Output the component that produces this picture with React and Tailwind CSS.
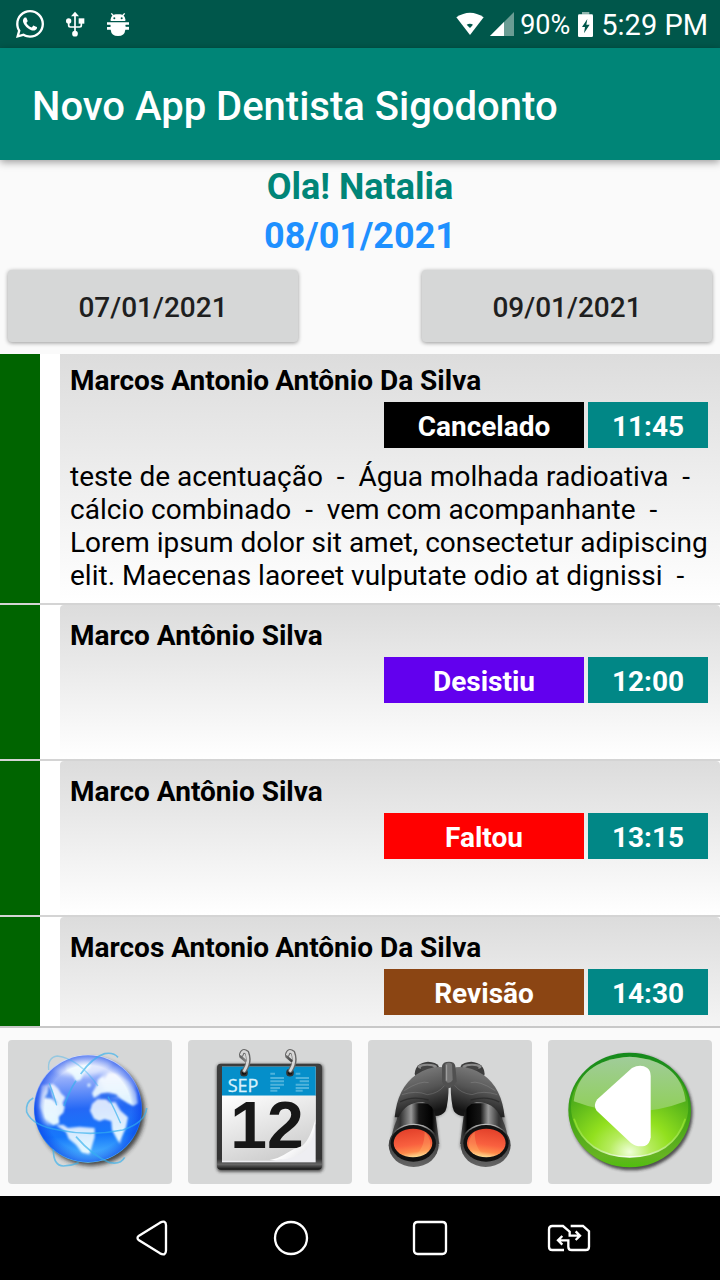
import { FaWhatsapp } from 'react-icons/fa';

const appointments = [
  {
    id: 1,
    name: ['Marcos Antonio', 'Antônio Da Silva'],
    status: 'Cancelado',
    color: 'bg-black',
    time: '11:45',
    notes:
      'teste de acentuação  -  Água molhada radioativa  -\ncálcio combinado  -  vem com acompanhante  -\nLorem ipsum dolor sit amet, consectetur adipiscing\nelit. Maecenas laoreet vulputate odio at dignissi  -',
  },
  { id: 2, name: ['Marco Antônio Silva'], status: 'Desistiu', color: 'bg-[#6200ee]', time: '12:00' },
  { id: 3, name: ['Marco Antônio Silva'], status: 'Faltou', color: 'bg-[#ff0000]', time: '13:15' },
  { id: 4, name: ['Marcos Antonio', 'Antônio Da Silva'], status: 'Revisão', color: 'bg-[#8b4513]', time: '14:30' },
];

const UsbIcon = () => (
  <svg viewBox="190 30 66 84" className="w-[22px] h-7" fill="#fff" stroke="#fff">
    <path d="M223 42V98M204 66V76Q204 81 209 81H237Q242 81 242 76V66" fill="none" strokeWidth="5" />
    <path d="M223 35L211 49H235Z" stroke="none" />
    <circle cx="204" cy="63" r="8" stroke="none" />
    <rect x="234" y="55" width="17" height="16" stroke="none" />
    <circle cx="223" cy="101" r="8.500" stroke="none" />
  </svg>
);

const BugIcon = () => (
  <svg viewBox="318 36 72 75" className="w-6 h-[25px]" fill="#fff">
    <path d="M334 40L341 48M374 40L367 48" stroke="#fff" strokeWidth="4" />
    <path d="M332 63V58Q334 44 347 43H361Q374 44 376 58V63Z" />
    <path d="M321 67H387V74H377V79H387V89H376Q374 108 354 108Q334 108 332 89H321V81H331V74H321Z" />
    <path d="M321 75H331V80H321ZM377 75H387V80H377Z" fill="#00574b" />
    <circle cx="343" cy="55" r="3" fill="#00574b" />
    <circle cx="365" cy="55" r="3" fill="#00574b" />
  </svg>
);

const WifiIcon = () => (
  <svg viewBox="57 36 84 72" className="w-7 h-6">
    <path d="M58 52Q99 25 140 52L99 105Z" fill="#fff" />
    <path d="M89 74Q99 69 108 74L99 84Z" fill="#00574b" />
  </svg>
);

const SignalIcon = () => (
  <svg viewBox="159 36 72 72" className="w-6 h-6">
    <path d="M231 36V108H159Z" fill="#6a9d94" />
    <path d="M201 66V108H159Z" fill="#fff" />
  </svg>
);

const BatteryIcon = () => (
  <svg viewBox="426 33 45 75" className="w-[15px] h-[25px]">
    <path d="M438 33H460V41H438Z" fill="#8fb5ae" />
    <rect x="426" y="40" width="45" height="68" rx="4" fill="#fff" />
    <path d="M454 54L438 78H447L444 97L461 71H451Z" fill="#00574b" />
  </svg>
);

const GlobeIcon = () => (
  <svg viewBox="24 60 492 432" className="w-full h-full">
    <defs>
      <linearGradient id="sea" x1="0.45" y1="0" x2="0.5" y2="1">
        <stop offset="0" stopColor="#dfe6ff" />
        <stop offset="0.25" stopColor="#86a4fa" />
        <stop offset="0.5" stopColor="#2468f6" />
        <stop offset="0.75" stopColor="#1678fb" />
        <stop offset="1" stopColor="#5cc6ff" />
      </linearGradient>
      <radialGradient id="seaEdge">
        <stop offset="0.8" stopColor="#0a3fe8" stopOpacity="0" />
        <stop offset="1" stopColor="#0a3fe8" stopOpacity="0.65" />
      </radialGradient>
      <linearGradient id="land" x1="0" y1="0" x2="0" y2="1">
        <stop offset="0" stopColor="#fff" stopOpacity="0.8" />
        <stop offset="1" stopColor="#e4f8ff" />
      </linearGradient>
      <filter id="soft"><feGaussianBlur stdDeviation="7" /></filter>
      <filter id="softLand"><feGaussianBlur stdDeviation="3" /></filter>
      <clipPath id="globeClip"><circle cx="264" cy="266" r="160" /></clipPath>
    </defs>
    <circle cx="273" cy="276" r="161" fill="#222" opacity="0.8" filter="url(#soft)" />
    <circle cx="264" cy="266" r="162" fill="url(#sea)" />
    <g clipPath="url(#globeClip)">
      <ellipse cx="240" cy="130" rx="96" ry="38" fill="#fff" opacity="0.6" filter="url(#soft)" />
      <ellipse cx="358" cy="184" rx="56" ry="46" fill="#fff" opacity="0.55" filter="url(#soft)" />
      <ellipse cx="146" cy="262" rx="30" ry="54" fill="#fff" opacity="0.55" filter="url(#soft)" />
      <g fill="url(#land)" filter="url(#softLand)">
        <path d="M196 128Q232 112 268 122L272 142L252 158L242 180L228 184L218 164L198 150Z" />
        <path d="M124 196L160 192L175 206L183 220L196 232L188 250L194 262L190 278L176 290L178 310L160 316L134 296L120 260Z" />
        <path d="M168 316L190 314L204 324L238 320L284 324L284 352L276 378L268 404L246 398L228 374L206 356L198 336Z" />
        <path d="M270 272L276 252L292 238L318 238L330 248L346 246L362 272L384 292L378 322L366 350L360 372L350 356L336 330L334 304L314 298L298 304L282 296Z" />
        <path d="M276 220L290 196L294 176L312 178L326 158L352 160L388 184L410 218L414 250L400 258L384 250L364 238L350 224L330 216L304 220L282 234Z" />
        <path d="M262 192L270 190L272 198L264 202ZM298 174L314 168L308 186Z" />
      </g>
      <g fill="#2368ee" filter="url(#softLand)" opacity="0.8">
        <path d="M146 194L154 210L158 228L174 254L156 236L134 234L142 218Z" />
        <path d="M300 226L322 220L350 224L350 232L326 236L302 234Z" />
        <path d="M354 238L372 248L392 268L372 262Z" />
      </g>
      <circle cx="264" cy="266" r="162" fill="url(#seaEdge)" />
    </g>
    <g fill="none" stroke="#34b1ee" strokeWidth="5" opacity="0.65">
      <path d="M192 258Q208 212 228 182M242 162Q278 112 314 101Q340 96 354 112" />
      <path d="M146 150Q142 112 172 108Q236 116 294 198" strokeWidth="4" opacity="0.6" />
      <path d="M100 234Q76 246 80 276Q98 318 176 330Q270 350 368 330Q436 308 440 264" />
      <path d="M148 190Q160 220 170 256M324 230Q344 268 362 310" strokeWidth="4" />
      <path d="M228 350Q280 410 330 428Q362 434 374 412M160 388Q160 438 190 438Q212 438 236 428" />
    </g>
  </svg>
);

const CalendarIcon = () => (
  <svg viewBox="24 60 492 432" className="w-full h-full">
    <defs>
      <linearGradient id="frame" x1="0" y1="0" x2="0" y2="1">
        <stop offset="0" stopColor="#3d3d3d" />
        <stop offset="0.9" stopColor="#333" />
        <stop offset="0.95" stopColor="#666" />
        <stop offset="1" stopColor="#111" />
      </linearGradient>
      <linearGradient id="sheet" x1="0" y1="0" x2="0.5" y2="1">
        <stop offset="0" stopColor="#fff" />
        <stop offset="1" stopColor="#cfcfcf" />
      </linearGradient>
      <linearGradient id="curl" x1="0" y1="0" x2="1" y2="1">
        <stop offset="0.3" stopColor="#bbb" />
        <stop offset="0.55" stopColor="#fff" />
        <stop offset="1" stopColor="#d8d8dc" />
      </linearGradient>
      <linearGradient id="ring" x1="0" y1="0" x2="1" y2="0">
        <stop offset="0" stopColor="#666" />
        <stop offset="0.5" stopColor="#fff" />
        <stop offset="1" stopColor="#444" />
      </linearGradient>
      <filter id="calShadow"><feGaussianBlur stdDeviation="4" /></filter>
    </defs>
    <rect x="110" y="132" width="320" height="324" rx="14" fill="#222" opacity="0.7" filter="url(#calShadow)" />
    <rect x="111" y="131" width="315" height="318" rx="12" fill="url(#frame)" />
    <rect x="126" y="140" width="281" height="287" fill="#eeeef2" />
    <rect x="126" y="140" width="281" height="87" fill="#058fca" />
    <path d="M126 227H407V310Q392 358 378 382Q342 418 270 422H126Z" fill="url(#sheet)" />
    <text x="143" y="216" fontFamily="'Open Sans', sans-serif" fontSize="54" fill="#d8f2fd" stroke="#d8f2fd" strokeWidth="1">SEP</text>
    <g stroke="#62bce0" strokeWidth="6" fill="none" opacity="0.8">
      <path d="M271 161H285M271 174H312M271 184H312M271 194H312M271 204H300M271 212H292" />
      <path d="M347 161H361M347 174H387M359 184H387M347 194H387M347 204H387M347 212H368" />
    </g>
    <text x="151" y="385" fontFamily="'Liberation Sans', sans-serif" fontWeight="700" fontSize="198" fill="#171717">12</text>
    <path d="M406 298Q390 360 366 378Q340 386 322 398Q296 416 268 419Q340 426 380 388Q404 358 406 298Z" fill="url(#curl)" />
    <g fill="none" strokeLinecap="round">
      <circle cx="192" cy="158" r="9" stroke="#333" strokeWidth="5" fill="#111" />
      <circle cx="330" cy="158" r="9" stroke="#333" strokeWidth="5" fill="#111" />
      <path d="M184 104Q188 88 201 98Q212 124 193 152M322 104Q326 88 339 98Q350 124 331 152" stroke="#666" strokeWidth="14" />
      <path d="M184 104Q188 88 200 98Q210 124 193 152M322 104Q326 88 338 98Q348 124 331 152" stroke="#d6d6d6" strokeWidth="8" />
      <path d="M182 110L196 122M320 110L334 122" stroke="url(#ring)" strokeWidth="8" />
    </g>
  </svg>
);

const BinocularsIcon = () => (
  <svg viewBox="24 60 492 432" className="w-full h-full">
    <defs>
      <linearGradient id="barrel" x1="0" y1="0" x2="1" y2="0">
        <stop offset="0" stopColor="#555" />
        <stop offset="0.2" stopColor="#333" />
        <stop offset="0.42" stopColor="#999" />
        <stop offset="0.58" stopColor="#151515" />
        <stop offset="0.85" stopColor="#000" />
        <stop offset="1" stopColor="#555" />
      </linearGradient>
      <linearGradient id="body" x1="0" y1="0" x2="0.3" y2="1">
        <stop offset="0" stopColor="#8a8a8a" />
        <stop offset="0.55" stopColor="#555" />
        <stop offset="1" stopColor="#151515" />
      </linearGradient>
      <linearGradient id="lens" x1="0.4" y1="0" x2="0.6" y2="1">
        <stop offset="0" stopColor="#e2402a" />
        <stop offset="0.55" stopColor="#f9603f" />
        <stop offset="0.8" stopColor="#ff8a4a" />
        <stop offset="1" stopColor="#ffe9a0" />
      </linearGradient>
      <linearGradient id="rim" x1="0" y1="0" x2="0" y2="1">
        <stop offset="0" stopColor="#c4c4c4" />
        <stop offset="0.25" stopColor="#333" />
        <stop offset="1" stopColor="#666" />
      </linearGradient>
      <filter id="binShadow"><feGaussianBlur stdDeviation="4" /></filter>
      <g id="tube">
        <path d="M112 270Q118 218 160 178L248 210L260 264Q248 288 228 290L238 384H94L98 336L104 290Z" fill="#222" opacity="0.5" filter="url(#binShadow)" />
        <path d="M164 162Q166 128 204 125Q228 126 236 138V174L170 178Z" fill="#3d3d3d" />
        <ellipse cx="202" cy="140" rx="29" ry="9" fill="#8a8a8a" />
        <ellipse cx="202" cy="144" rx="20" ry="7" fill="#444" />
        <path d="M120 250H222L238 372H92Q96 330 110 300Z" fill="url(#barrel)" />
        <path d="M104 292Q112 204 168 164Q210 136 252 142L266 190Q266 250 256 274Q246 288 226 288Q222 254 188 246Q136 246 116 292Z" fill="url(#body)" />
        <path d="M126 224Q168 210 202 224Q236 220 254 196M132 212Q182 180 206 188" stroke="#aaa" strokeWidth="2" fill="none" opacity="0.4" />
        <path d="M120 246Q156 226 206 240" stroke="#252525" strokeWidth="4" fill="none" opacity="0.7" />
        <ellipse cx="161" cy="376" rx="75" ry="65" fill="url(#rim)" />
        <ellipse cx="160" cy="370" rx="68" ry="55" fill="#111" />
        <ellipse cx="159" cy="369" rx="58" ry="43" fill="url(#lens)" />
        <path d="M194 334Q220 362 206 392Q184 408 160 410Q194 390 194 334Z" fill="#ffc070" opacity="0.3" />
      </g>
    </defs>
    <use href="#tube" />
    <use href="#tube" transform="translate(538 0) scale(-1 1)" />
    <path d="M246 138Q248 125 267 125Q284 125 286 138L290 184Q280 202 266 205Q252 200 246 184Z" fill="#505050" />
    <path d="M256 132Q266 124 276 132L278 180Q268 196 256 182Z" fill="#747474" />
    <path d="M260 134V182" stroke="#a5a5a5" strokeWidth="3" />
  </svg>
);

const BackIcon = () => (
  <svg viewBox="24 60 492 432" className="w-full h-full">
    <defs>
      <linearGradient id="greenRim" x1="0" y1="0" x2="0" y2="1">
        <stop offset="0" stopColor="#148a1c" />
        <stop offset="0.55" stopColor="#41a315" />
        <stop offset="0.9" stopColor="#66b422" />
        <stop offset="1" stopColor="#4fbe0e" />
      </linearGradient>
      <radialGradient id="greenFace" cx="0.5" cy="0.95" r="0.7">
        <stop offset="0" stopColor="#efffd8" />
        <stop offset="0.25" stopColor="#b6ec5e" />
        <stop offset="0.5" stopColor="#92e01e" />
        <stop offset="1" stopColor="#4fae1a" />
      </radialGradient>
      <linearGradient id="gloss" x1="0" y1="0" x2="0" y2="1">
        <stop offset="0" stopColor="#a0cc9a" />
        <stop offset="1" stopColor="#90d058" />
      </linearGradient>
      <linearGradient id="lip" x1="0" y1="0" x2="1" y2="0">
        <stop offset="0" stopColor="#8adb28" />
        <stop offset="0.5" stopColor="#fff" />
        <stop offset="1" stopColor="#8adb28" />
      </linearGradient>
      <filter id="backShadow"><feGaussianBlur stdDeviation="5" /></filter>
    </defs>
    <ellipse cx="274" cy="277" rx="184" ry="174" fill="#222" opacity="0.75" filter="url(#backShadow)" />
    <ellipse cx="269" cy="270" rx="184" ry="172" fill="url(#greenRim)" />
    <ellipse cx="269" cy="261" rx="176" ry="150" fill="url(#greenFace)" />
    <path d="M102 296Q138 408 269 411Q400 408 436 296" fill="none" stroke="url(#lip)" strokeWidth="5" />
    <path d="M101 244Q116 120 269 110Q422 120 437 244Q270 308 101 244Z" fill="url(#gloss)" />
    <path d="M276 144Q302 130 322 144Q332 152 332 168V352Q330 372 314 378Q288 382 272 368L170 272Q158 256 172 238Z" fill="#fff" />
  </svg>
);

const menu = [
  { label: 'Site', Icon: GlobeIcon },
  { label: 'Agenda', Icon: CalendarIcon },
  { label: 'Pesquisar', Icon: BinocularsIcon },
  { label: 'Voltar', Icon: BackIcon },
];

const navIcons = [
  {
    label: 'Back',
    view: '75 66 102 120',
    size: 'w-[34px] h-10',
    path: 'M87 119L150 80Q168 71 168 88V163Q168 181 150 172L87 133Q78 126 87 119Z',
  },
  {
    label: 'Home',
    view: '480 66 120 120',
    size: 'w-10 h-10',
    path: 'M492 126A48 48 0 1 1 588 126A48 48 0 1 1 492 126Z',
  },
  {
    label: 'Recents',
    view: '897 66 120 120',
    size: 'w-10 h-10',
    path: 'M920 78H994Q1005 78 1005 89V163Q1005 174 994 174H920Q909 174 909 163V89Q909 78 920 78Z',
  },
  {
    label: 'Switch',
    view: '1302 66 144 120',
    size: 'w-12 h-10',
    path: 'M1359 162H1324Q1314 162 1314 152V100Q1314 90 1324 90H1356L1376 107V119H1406M1394 106L1407 119L1394 132M1379 90H1416L1434 106V152Q1434 162 1424 162H1382Q1372 162 1372 152V133H1342M1354 120L1341 133L1354 146',
  },
];

const StatusBar = () => (
  <div className="flex h-12 shrink-0 items-center justify-between bg-[#00574b] pl-4 pr-3 text-white">
    <div className="flex items-center">
      <FaWhatsapp className="h-8 w-7" />
      <div className="ml-5"><UsbIcon /></div>
      <div className="ml-5"><BugIcon /></div>
    </div>
    <div className="flex items-center">
      <WifiIcon />
      <div className="ml-1.5"><SignalIcon /></div>
      <span className="ml-1.5 pt-0.5 text-[27px] leading-8">90%</span>
      <div className="ml-2"><BatteryIcon /></div>
      <span className="ml-2 pt-0.5 text-[29px] leading-8">5:29 PM</span>
    </div>
  </div>
);

const Appointment = ({ item }) => (
  <li className="flex border-b-2 border-[#d4d4d4] bg-white">
    <div className="w-10 shrink-0 bg-[#006400]" />
    <div className="ml-5 min-h-[154px] flex-1 rounded-t bg-linear-to-b from-[#dcdcdc] to-white pb-[11px] pl-[10px] pt-[14px]">
      <h2 className="flex gap-1.5 text-[28px] font-bold leading-[33px]">
        {item.name.map((part) => (
          <span key={part}>{part}</span>
        ))}
      </h2>
      <div className="mt-[5px] flex justify-end gap-1 pr-3 text-center text-[28px] font-bold leading-[46px] text-white">
        <span className={`h-[46px] w-[200px] pt-0.5 ${item.color}`}>{item.status}</span>
        <span className="h-[46px] w-[120px] bg-[#018786] pt-0.5">{item.time}</span>
      </div>
      {item.notes && (
        <p className="mt-3 whitespace-pre-wrap text-[28px] leading-[33px]">{item.notes}</p>
      )}
    </div>
  </li>
);

const App = () => {
  return (
    <div className="flex h-screen flex-col bg-[#fafafa] font-[Roboto,sans-serif] text-black">
      <StatusBar />
      <header className="z-10 flex h-28 shrink-0 items-center bg-[#008577] px-8 pt-1.5 shadow-[0_2px_8px_rgba(0,0,0,0.4)]">
        <h1 className="text-[40px] font-medium text-white">Novo App Dentista Sigodonto</h1>
      </header>

      <div className="shrink-0 pt-[3px] text-center text-[36px] font-bold leading-[49px]">
        <p className="text-[#008577]">Ola! Natalia</p>
        <p className="text-[#1e90ff]">08/01/2021</p>
      </div>

      <div className="flex shrink-0 justify-between px-2 pb-3 pt-[9px] text-[28px] font-medium text-[#1f1f1f]">
        <button className="h-18 w-[290px] rounded bg-[#d6d7d7] pt-1 shadow-[0_1px_4px_rgba(0,0,0,0.4)]">07/01/2021</button>
        <button className="h-18 w-[290px] rounded bg-[#d6d7d7] pt-1 shadow-[0_1px_4px_rgba(0,0,0,0.4)]">09/01/2021</button>
      </div>

      {/* lista de consultas do dia, um pouco rolada */}
      <main className="min-h-0 flex-1 overflow-hidden">
        <ul className="-mt-1">
          {appointments.map((item) => (
            <Appointment key={item.id} item={item} />
          ))}
        </ul>
      </main>

      <div className="grid shrink-0 grid-cols-4 gap-4 border-t-2 border-[#c8c8c8] px-2 py-3">
        {menu.map(({ label, Icon }) => (
          <button key={label} aria-label={label} className="h-36 rounded bg-[#d6d7d7]">
            <Icon />
          </button>
        ))}
      </div>

      <nav className="grid h-21 shrink-0 grid-cols-4 place-items-center bg-black px-[82px]">
        {navIcons.map((icon) => (
          <button key={icon.label} aria-label={icon.label}>
            <svg viewBox={icon.view} className={icon.size} fill="none" stroke="#fff" strokeWidth="7">
              <path d={icon.path} />
            </svg>
          </button>
        ))}
      </nav>
    </div>
  );
};

export default App;
